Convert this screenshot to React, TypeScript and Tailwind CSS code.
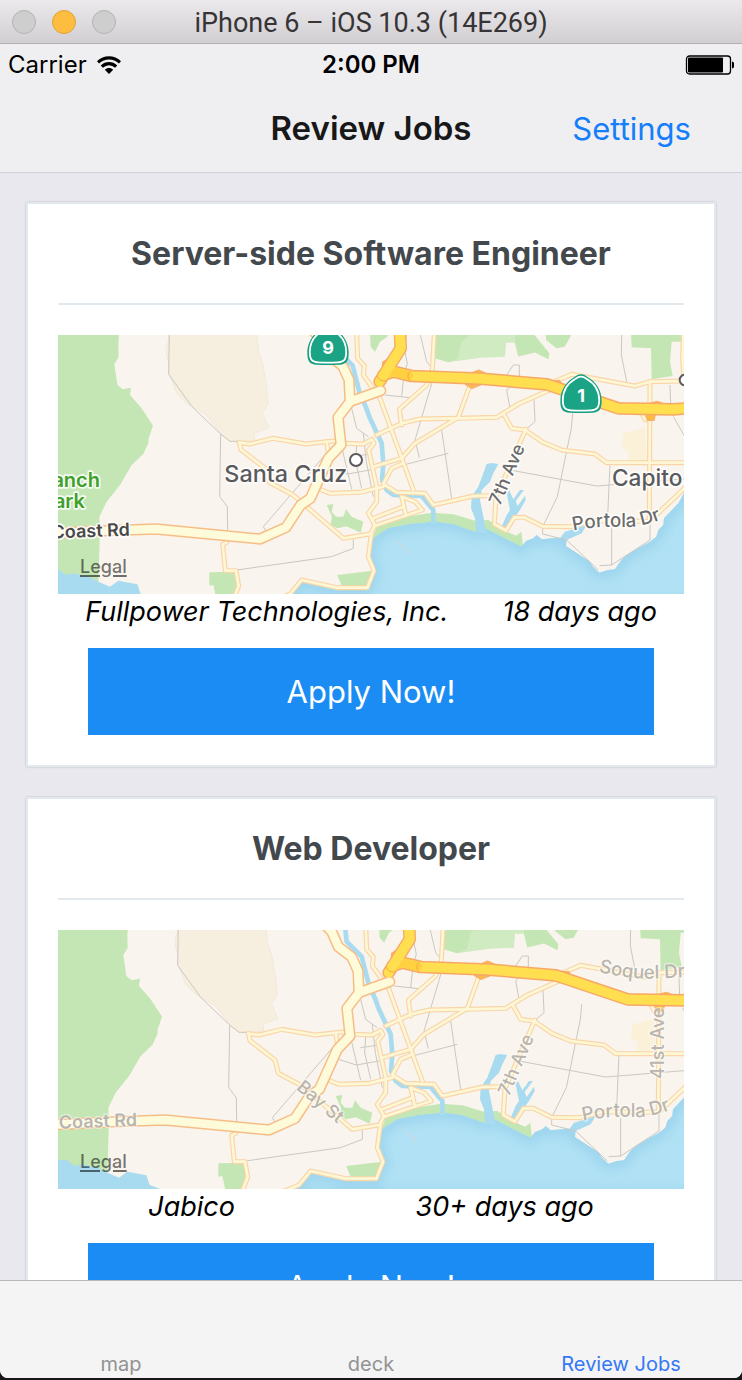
import React from "react";

type LabelSet = "city" | "streets";

type Job = {
  title: string;
  company: string;
  posted: string;
  viewBox: string;
  labels: LabelSet;
};

const jobs: Job[] = [
  {
    title: "Server-side Software Engineer",
    company: "Fullpower Technologies, Inc.",
    posted: "18 days ago",
    viewBox: "0 0 1878 777",
    labels: "city",
  },
  {
    title: "Web Developer",
    company: "Jabico",
    posted: "30+ days ago",
    viewBox: "-27 12 1878 777",
    labels: "streets",
  },
];

const minorStreets = [
  "M334-5 332 118 402 215 488 297 516 319 546 319",
  "M488 297 485 485 508 515 509 590",
  "M1086-5 1106 80 1131 110 1117 160 1071 315 1084 368",
  "M1040 45 1048 85 1038 120 1031 185M981 180 1056 188",
  "M1151 285 1181 490M1036 390 1171 355",
  "M881 220 896 280 931 305M851 335 881 463M896 330 893 380 911 460",
  "M868 417 936 405M916 295 925 380 946 485M815 400 868 417M880 365 930 358",
  "M801 360 616 575 625 590M536 705 606 695 821 665 886 640 886 613",
  "M1691-5 1690 60 1706 140M1346 165 1356 220M1346 165 1370 140M1346 120 1366 90 1384 90 1384 130",
  "M1428 190 1431 260 1401 285M1544 235 1540 280 1498 485 1454 575 1454 597 1526 615 1621 705",
  "M1356 405 1616 453 1900 430M1656 385 1649 545M1661 575 1661 690M1625 692 1661 690 1776 615 1776 560",
  "M1836 150 1838 210M1846 245 1900 340",
];

const roads = [
  "M544 323 576 327 644 310 744 327 826 318 866 325 916 327 941 313 948 325 932 345 956 455 956 500 931 535 951 570",
  "M544 323 549 344 624 402 634 442 704 479 746 515 856 610 936 597",
  "M806 320 811 355M791 465 816 475 906 472 976 455",
  "M951 570 941 590 931 665 948 707 928 758 836 758 731 735 696 777 640 800",
  "M896-5 899 70 919 93 916 120 966 190 1066 465",
  "M1129-5 1123 105 1106 150 1024 223 1031 270",
  "M956 300 1031 265 1086 252 1201 250 1316 247 1381 207 1476 165",
  "M1236 150 1201 247 1071 325 1031 370 946 395",
  "M1036 385 1001 400 976 447 1016 472 1101 475 1126 510 1246 483 1306 482",
  "M946 550 1036 515M1043 538 1031 485 1071 500 1093 525 951 572",
  "M1336 235 1361 280 1401 285 1455 322 1511 345 1611 357 1646 383 1900 383",
  "M1404 282 1314 487 1309 567 1344 587 1369 547 1399 547 1454 574 1539 575 1609 557 1774 559 1851 487 1900 440",
  "M1466 150 1541 118 1731 153 1776 140 1900 138",
  "M1776 140 1774 559M1876-5 1874 70 1878 140M1751 235 1762 255 1776 255",
  "M506 622 494 628 502 707 534 707 542 753 524 800",
];

const ramps = [
  "M972 120 974 82 1004 62Z",
  "M1240 114 1262 105 1288 117Z",
  "M1222 148 1242 160 1268 150Z",
  "M1470 140 1504 136 1520 158Z",
  "M1764 238 1768 256 1788 256 1792 238Z",
  "M1772 206 1798 199 1822 208Z",
];

const mainRoad =
  "M-40 596 150 587 294 582 606 612 684 577 728 510 757 490 811 370 849 330 840 247 876 200 968 167M876 200 873 135 854 93 814 62 794 17 770-8";

const highway =
  "M1026-10 1028 40 965 140M976 120 1006 110 1061 123 1266 131 1466 148 1681 220 1846 223 1910 218";

const landGreens = [
  "183,-10 181,30 182,65 169,88 178,150 194,163 219,158 216,180 251,220 285,272 272,310 271,325 256,357 221,390 186,450 146,500 124,545 126,585 121,745 -40,745 -40,-10",
  "936,-10 991,-10 988,5 966,20 951,50 938,35",
  "1371,23 1381,62 1430,52 1471,73 1474,55 1421,-10 1371,-10",
  "1464,-10 1464,15 1496,40 1520,35 1537,5 1545,-10",
  "1719,-10 1900,-10 1900,20 1841,20 1836,80 1844,123 1781,133 1779,40 1721,37",
  "806,510 826,507 821,530 834,545 856,545 864,523 881,545 916,560 908,593 866,574 838,580 818,570 822,545",
  "838,720 946,707 934,757 851,753",
  "454,712 536,710 544,755 524,795 476,795 466,750 454,752",
  "940,620 956,575 1046,545 1121,533 1186,538 1251,557 1291,555 1346,590 1375,602 1390,590 1396,640 1326,620 1250,600 1130,570 991,590",
];

const bay =
  "M660 810 696 777 731 740 836 762 928 762 948 707 931 665 941 620 951 605 991 580 1056 567 1131 560 1186 568 1254 592 1286 582 1326 603 1391 635 1404 618 1426 610 1436 600 1451 613 1498 608 1526 610 1524 633 1596 680 1603 693 1624 713 1650 705 1671 703 1690 675 1706 660 1740 640 1776 620 1795 605 1801 585 1816 570 1818 550 1861 505 1878 475 1920 440 1920 810Z";

const inlets = [
  "1286,387 1300,384 1321,387 1306,415 1296,440 1271,465 1266,495 1276,545 1286,595 1254,595 1251,550 1239,520 1241,485 1261,455 1276,415",
  "1331,575 1346,540 1356,525 1346,475 1353,465 1366,493 1386,465 1398,465 1373,498 1379,513 1401,482 1403,495 1386,525 1361,560 1341,585",
  "1506,610 1521,590 1556,580 1586,570 1571,595 1526,615",
  "-40,700 0,703 24,720 46,715 96,727 121,740 156,755 181,737 238,748 248,777 310,800 -40,810",
];

const shieldPath =
  "M0-58C8-58 14-54 20-50C44-36 62-12 62 22C62 46 56 56 34 57C12 58-12 58-34 57C-56 56-62 46-62 22C-62-12-44-36-20-50C-14-54-8-58 0-58Z";

function Shield({ x, y, route }: { x: number; y: number; route: string }) {
  return (
    <g transform={`translate(${x} ${y})`} paintOrder="normal">
      <path d={shieldPath} fill="#1a9e83" />
      <path d={shieldPath} transform="scale(0.88)" fill="#1ba385" stroke="#fff" strokeOpacity="1" strokeWidth="6" />
      <text y="24" textAnchor="middle" fontSize="54" fontWeight="700" fill="#fff">
        {route}
      </text>
    </g>
  );
}

function CityLabels() {
  return (
    <g
      fill="#5a5a5c"
      stroke="#fff"
      strokeOpacity="0.85"
      strokeWidth="10"
      strokeLinejoin="round"
      paintOrder="stroke"
      fontWeight="500"
    >
      <g stroke="none">
        <Shield x={810} y={32} route="9" />
        <Shield x={1569} y={176} route="1" />
      </g>
      <g fill="#fff" stroke="#5a5a5c" strokeOpacity="1" strokeWidth="6" paintOrder="normal">
        <circle cx="894" cy="375" r="18" />
        <circle cx="1881" cy="135" r="16" />
      </g>
      <text x="499" y="440" fontSize="70">Santa Cruz</text>
      <text x="1662" y="452" fontSize="68">Capito</text>
      <text x="126" y="455" fontSize="60" textAnchor="end" fill="#3fa02a" fontWeight="600">anch</text>
      <text x="81" y="518" fontSize="60" textAnchor="end" fill="#3fa02a" fontWeight="600">ark</text>
      <text x="216" y="602" fontSize="54" textAnchor="end" fill="#48484a" fontWeight="600" transform="rotate(-2 216 602)">
        Coast Rd
      </text>
      <path id="portola-city" d="M1546 587Q1590 577 1640 576H1700Q1790 576 1890 512" fill="none" stroke="none" />
      <text fontSize="56" fill="#6b6b6d">
        <textPath href="#portola-city">Portola Dr</textPath>
      </text>
      <text fontSize="54" fill="#6b6b6d" transform="translate(1326 514) rotate(-67)">7th Ave</text>
    </g>
  );
}

function StreetLabels() {
  return (
    <g
      fill="#b9b5ae"
      stroke="#fff"
      strokeOpacity="0.5"
      strokeWidth="8"
      strokeLinejoin="round"
      paintOrder="stroke"
      fontWeight="500"
      fontSize="54"
    >
      <text x="-24" y="608" fontWeight="600" transform="rotate(-2 -24 608)">Coast Rd</text>
      <text transform="translate(686 488) rotate(40)">Bay St</text>
      <text transform="translate(1326 512) rotate(-67)">7th Ave</text>
      <path id="portola-streets" d="M1548 585Q1590 575 1640 574H1700Q1790 574 1890 510" fill="none" stroke="none" />
      <text fontSize="56">
        <textPath href="#portola-streets">Portola Dr</textPath>
      </text>
      <path id="soquel" d="M1594 138Q1680 158 1740 158T1900 150" fill="none" stroke="none" />
      <text fontSize="56">
        <textPath href="#soquel">Soquel Dr</textPath>
      </text>
      <text transform="translate(1790 459) rotate(-90)">41st Ave</text>
    </g>
  );
}

function JobMap({ viewBox, labels }: { viewBox: string; labels: LabelSet }) {
  const shade = `bay-shade-${labels}`;
  const clip = `bay-clip-${labels}`;
  return (
    <div className="relative">
      <svg
        viewBox={viewBox}
        preserveAspectRatio="xMidYMid slice"
        className="block h-[259px] w-full font-['Inter',sans-serif]"
        role="img"
        aria-label="Map of the job location"
      >
        <defs>
          <filter id={shade} x="-5%" y="-5%" width="110%" height="110%">
            <feGaussianBlur stdDeviation="14" />
          </filter>
          <clipPath id={clip}>
            <path d={bay} />
          </clipPath>
        </defs>
        <rect x="-40" y="-20" width="1960" height="840" fill="#f9f4ed" />
        <polygon
          points="334,-10 331,20 324,40 325,60 332,85 334,118 356,175 386,205 446,240 488,295 516,319 546,319 590,315 588,295 633,278 613,235 631,207 626,155 613,80 602,55 596,-10"
          fill="#f6efe0"
          stroke="#efe4d4"
          strokeWidth="2"
        />
        <polygon points="1696,295 1726,288 1761,277 1766,378 1711,378 1711,347 1691,340" fill="#fbf1d9" />
        <polygon points="1131,-10 1131,70 1171,82 1266,68 1341,65 1344,23 1371,23 1381,65 1440,50 1421,-10" fill="#d0eac1" />
        <polygon points="1131,-10 1131,70 1171,82 1200,70 1210,20 1250,-10" fill="#c3e6b4" />
        {landGreens.map((points) => (
          <polygon key={points} points={points} fill="#c3e6b4" />
        ))}
        <path d={bay} fill="#b0e1f4" />
        <path
          d={bay}
          fill="none"
          stroke="#9ed6ee"
          strokeWidth="40"
          filter={`url(#${shade})`}
          clipPath={`url(#${clip})`}
        />
        {inlets.map((points) => (
          <polygon key={points} points={points} fill="#a8dbef" />
        ))}
        <path
          d="M834 0 839 47 884 92 904 170 925 220 936 250 971 325 976 385 972 435 986 465 1006 480 1091 483 1126 525 1126 568"
          fill="none"
          stroke="#a8dbef"
          strokeWidth="14"
          strokeLinejoin="round"
        />
        <path d="M1004 608 1030 630 1052 660M1030 626 1046 642" fill="none" stroke="#c3dbe4" strokeWidth="4" />
        <g fill="none" stroke="#cbc8c3" strokeWidth="3">
          {minorStreets.map((d) => (
            <path key={d} d={d} />
          ))}
        </g>
        <g fill="none" stroke="#f9d5a8" strokeWidth="15" strokeLinejoin="round" strokeLinecap="round">
          {roads.map((d) => (
            <path key={d} d={d} />
          ))}
        </g>
        <g fill="none" stroke="#fdf7d6" strokeWidth="8" strokeLinejoin="round" strokeLinecap="round">
          {roads.map((d) => (
            <path key={d} d={d} />
          ))}
        </g>
        <g fill="#fdbb3c" stroke="#f7b070" strokeWidth="4" strokeLinejoin="round">
          {ramps.map((d) => (
            <path key={d} d={d} />
          ))}
        </g>
        <g fill="none" strokeLinejoin="round" strokeLinecap="round">
          <path d={highway} stroke="#f7a866" strokeWidth="38" />
          <path d={mainRoad} stroke="#f7bd86" strokeWidth="34" />
          <path d={highway} stroke="#ffdf50" strokeWidth="29" />
          <path d="M976 120 1006 110 1052 121" stroke="#ffd040" strokeWidth="27" />
          <path d="M1026-10 1028 40 976 122" stroke="#ffdf50" strokeWidth="29" />
          <path d={mainRoad} stroke="#fdfbda" strokeWidth="25" />
          <path d="M1056 110Q1042 123 1056 137" stroke="#f9a545" strokeWidth="3" />
          <path d="M958 124Q964 140 984 138" stroke="#f9a545" strokeWidth="3" />
        </g>
        {labels === "city" ? <CityLabels /> : <StreetLabels />}
      </svg>
      <a
        href="#legal"
        className="absolute bottom-4 left-[22px] text-lg leading-[22px] font-medium text-black/55 underline decoration-2 underline-offset-2"
      >
        Legal
      </a>
    </div>
  );
}

function JobCard({ job }: { job: Job }) {
  return (
    <article className="border-2 border-[#e1e8ee] bg-white p-[30px] shadow-[0_0_2px_rgba(0,0,0,0.2)]">
      <h2 className="border-b-2 border-[#e1e8ee] pb-[30px] text-center text-[32px] leading-[39px] font-bold text-[#43484d]">
        {job.title}
      </h2>
      <div className="pt-[30px]">
        <JobMap viewBox={job.viewBox} labels={job.labels} />
        <div className="flex justify-around text-[27px] leading-9 text-black italic">
          <span>{job.company}</span>
          <span>{job.posted}</span>
        </div>
        <div className="px-[30px] pt-[18px]">
          <button type="button" className="block h-[87px] w-full bg-[#1a8cf3] pt-0.5 text-[31px] text-white">
            Apply Now!
          </button>
        </div>
      </div>
    </article>
  );
}

function TitleBar() {
  return (
    <div className="flex h-11 shrink-0 items-center rounded-t-lg border-b border-[#b1afb1] bg-linear-to-b from-[#ebe9eb] to-[#d1cfd1] px-3">
      <div className="flex flex-1 gap-4">
        <button type="button" aria-label="Close" className="size-6 rounded-full border border-[#b4b3b4] bg-[#cfcecf]" />
        <button type="button" aria-label="Minimize" className="size-6 rounded-full border border-[#dfa13a] bg-[#fdbd40]" />
        <button type="button" aria-label="Zoom" className="size-6 rounded-full border border-[#b4b3b4] bg-[#cfcecf]" />
      </div>
      <span className="pt-0.5 text-[27px] leading-8 text-[#363436] font-['Roboto',sans-serif]">
        iPhone 6 – iOS 10.3 (14E269)
      </span>
      <div className="flex-1" />
    </div>
  );
}

function StatusBar() {
  return (
    <div className="flex h-[42px] items-center px-2 text-2xl text-black">
      <div className="flex flex-1 items-center gap-2.5">
        <span>Carrier</span>
        <svg viewBox="0 0 24 18" className="h-[18px] w-6" aria-label="Wi-Fi">
          <g fill="none" stroke="#000" strokeWidth="3.2">
            <path d="M1 6.4C7.200.4 16.800.4 23 6.400" />
            <path d="M4.800 10.600C9 6.600 15 6.600 19.200 10.600" />
          </g>
          <path d="M7.800 13.700C10.200 11.400 13.800 11.400 16.200 13.700L12 18Z" />
        </svg>
      </div>
      <span className="font-semibold">2:00 PM</span>
      <div className="flex flex-1 justify-end">
        <svg viewBox="0 0 49 20" className="h-5 w-[49px]" aria-label="Battery">
          <rect x="1.500" y="1" width="44" height="18" rx="3" fill="none" stroke="#000" strokeWidth="1.300" />
          <rect x="3" y="2.500" width="35" height="15" rx="1" />
          <path d="M47 6.500C49 7 49.500 8.500 49.500 10S49 13 47 13.500Z" />
        </svg>
      </div>
    </div>
  );
}

export default function App() {
  return (
    <div className="h-screen bg-[#17171a] pb-0.5 font-['Inter','Liberation_Sans',sans-serif]">
      <div className="flex h-full flex-col overflow-hidden rounded-b-lg bg-[#e9e8ee]">
        <TitleBar />
        <header className="shrink-0 border-b border-[#d3d3d6] bg-[#efeff1]">
          <StatusBar />
          <div className="grid h-[86px] grid-cols-3 items-center">
            <h1 className="col-start-2 text-center text-[33px] font-semibold whitespace-nowrap text-[#181818]">
              Review Jobs
            </h1>
            <button type="button" className="justify-self-end pr-[51px] text-[31px] text-[#157efb]">
              Settings
            </button>
          </div>
        </header>
        <main className="min-h-0 flex-1 overflow-y-auto px-[26px] pt-[29px] pb-[30px] [scrollbar-width:none]">
          <div className="flex flex-col gap-[30px]">
            {jobs.map((job) => (
              <JobCard key={job.title} job={job} />
            ))}
          </div>
        </main>
        <nav className="grid h-[98px] shrink-0 grid-cols-3 items-end gap-2 border-t border-[#b9b9b9] bg-[#f4f4f4] text-[20px] leading-7 text-[#929292]">
          <button type="button">map</button>
          <button type="button">deck</button>
          <button type="button" className="text-[#3478f6]" aria-current="page">
            Review Jobs
          </button>
        </nav>
      </div>
    </div>
  );
}
